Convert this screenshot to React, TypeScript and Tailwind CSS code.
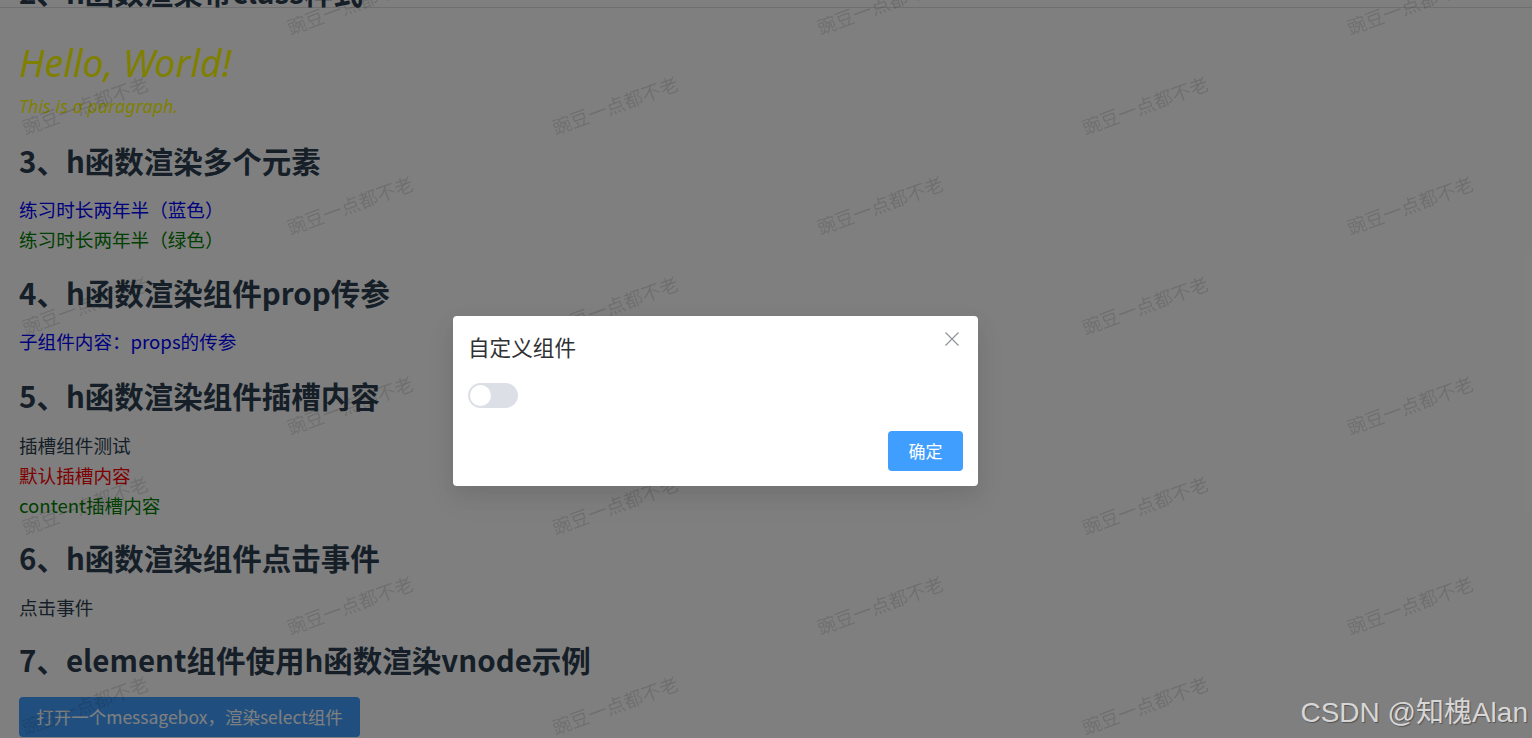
type Block =
  | { kind: 'h'; text: string; cls: string }
  | { kind: 'p'; text: string; cls: string };

const blocks: Block[] = [
  { kind: 'h', text: '3、h函数渲染多个元素', cls: 'mt-[22px]' },
  { kind: 'p', text: '练习时长两年半（蓝色）', cls: 'mt-[12px] text-[#0000ff]' },
  { kind: 'p', text: '练习时长两年半（绿色）', cls: 'text-[#008000]' },
  { kind: 'h', text: '4、h函数渲染组件prop传参', cls: 'mt-[20px]' },
  { kind: 'p', text: '子组件内容：props的传参', cls: 'mt-[12px] text-[#0000ff]' },
  { kind: 'h', text: '5、h函数渲染组件插槽内容', cls: 'mt-[21px]' },
  { kind: 'p', text: '插槽组件测试', cls: 'mt-[13px] text-[#2c3e50]' },
  { kind: 'p', text: '默认插槽内容', cls: 'text-[#ff0000]' },
  { kind: 'p', text: 'content插槽内容', cls: 'text-[#008000]' },
  { kind: 'h', text: '6、h函数渲染组件点击事件', cls: 'mt-[19px]' },
  { kind: 'p', text: '点击事件', cls: 'mt-[13px] text-[#2c3e50]' },
  { kind: 'h', text: '7、element组件使用h函数渲染vnode示例', cls: 'mt-[19px]' },
];

// staggered watermark grid: odd columns start lower
const marks: { x: number; y: number }[] = [];
for (let c = 0; c < 6; c++) {
  for (let r = 0; r < 5; r++) {
    const y = (c % 2 === 0 ? 105 : 5) + r * 200;
    if (y < 780) marks.push({ x: 85 + c * 265, y });
  }
}

export default function App() {
  return (
    <div className="relative h-[738px] w-[1532px] overflow-hidden bg-white font-['Noto_Sans_CJK_SC','Noto_Sans',sans-serif]">
      {/* page content */}
      <div className="px-[19px]">
        <h2 className="mt-[-29px] h-[40px] text-[29.5px] leading-[40px] font-bold text-[#2c3e50] whitespace-nowrap">
          2、h函数渲染带class样式
        </h2>
        <h1 className="mt-[28px] h-[48px] text-[37.5px] leading-[48px] italic text-[#ffff00] font-['Noto_Sans','Open_Sans',sans-serif]">
          Hello, World!
        </h1>
        <p className="mt-[4px] h-[30px] text-[18px] leading-[30px] italic text-[#ffff00] font-['Noto_Sans','Open_Sans',sans-serif]">
          This is a paragraph.
        </p>

        {blocks.map((b, i) =>
          b.kind === 'h' ? (
            <h2 key={i} className={`h-[40px] text-[29.5px] leading-[34px] font-bold text-[#2c3e50] whitespace-nowrap ${b.cls}`}>
              {b.text}
            </h2>
          ) : (
            <p key={i} className={`h-[30px] text-[18.6px] leading-[28px] whitespace-nowrap ${b.cls}`}>
              {b.text}
            </p>
          )
        )}

        <button className="mt-[15px] h-[40px] w-[341px] rounded-[4px] bg-[#409eff] text-[17.5px] text-white">
          打开一个messagebox，渲染select组件
        </button>
      </div>

      {/* watermark */}
      <div className="pointer-events-none absolute inset-0">
        {marks.map((m, i) => (
          <span
            key={i}
            className="absolute -translate-x-1/2 -translate-y-1/2 -rotate-[20deg] whitespace-nowrap text-[19px] text-black/[0.14]"
            style={{ left: m.x, top: m.y }}
          >
            豌豆一点都不老
          </span>
        ))}
      </div>

      {/* overlay + dialog */}
      <div className="absolute inset-0 bg-black/50">
        <div className="ml-[453px] mt-[316px] flex h-[170px] w-[525px] flex-col rounded-[4px] bg-white px-[15px] pb-[15px] shadow-[0_12px_32px_4px_rgba(0,0,0,0.04),0_8px_20px_rgba(0,0,0,0.08)]">
          <div className="flex items-start justify-between pt-[16px]">
            <span className="text-[21.6px] leading-[30px] text-[#303133]">自定义组件</span>
            <svg className="mr-[3px] mt-[-1px] h-[16px] w-[16px]" viewBox="0 0 16 16" fill="none" stroke="#909399" strokeWidth="1.2">
              <path d="M1.5 1.5 14.5 14.5M14.5 1.5 1.5 14.5" />
            </svg>
          </div>
          <div className="mt-[21px] flex h-[25px] w-[50px] items-center rounded-full bg-[#dcdfe6] px-[2px]">
            <div className="h-[21px] w-[21px] rounded-full bg-white" />
          </div>
          <div className="mt-auto flex justify-end">
            <button className="h-[40px] w-[75px] rounded-[4px] bg-[#409eff] text-[17px] leading-[36px] text-white">确定</button>
          </div>
        </div>
      </div>

      {/* top edge line */}
      <div className="absolute left-0 right-0 top-[7px] h-px bg-black/[0.12]" />

      {/* image watermark */}
      <div className="absolute bottom-[9px] right-[4px] text-[28px] leading-[32px] text-[#d6d6d6] [text-shadow:1px_1px_1px_rgba(0,0,0,0.35)] font-['Liberation_Sans','Noto_Sans_CJK_SC',sans-serif]">
        CSDN @知槐Alan
      </div>
    </div>
  );
}
